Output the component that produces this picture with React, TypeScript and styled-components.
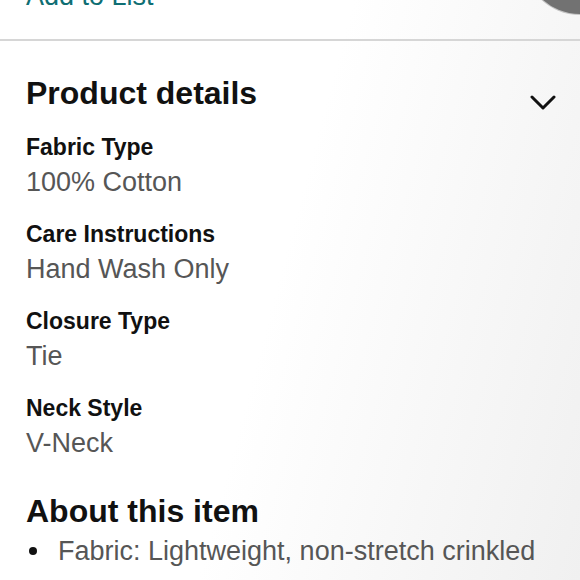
import React from "react";
import styled, { createGlobalStyle } from "styled-components";

const Global = createGlobalStyle`
  html, body { margin: 0; padding: 0; }
  body { font-family: "Liberation Sans", Arial, sans-serif; background: #fff; }
`;

const Page = styled.div`
  position: relative;
  width: 580px;
  height: 580px;
  overflow: hidden;
  background: linear-gradient(105deg, #ffffff 48%, #f0f0f0 100%);
`;

const TopBlob = styled.div`
  position: absolute;
  right: -56px;
  top: -98px;
  width: 112px;
  height: 112px;
  border-radius: 50%;
  background: #727272;
  box-shadow: 0 0 0 1px #c4c4c4;
`;

const TopBar = styled.div`
  display: flow-root;
  padding: 0 26px;
  height: 39px;
  border-bottom: 2px solid #d6d6d6;
`;

const AddLink = styled.div`
  margin-top: -19px;
  font-size: 27px;
  line-height: 30px;
  color: #0f6e73;
`;

const Content = styled.div`
  display: flow-root;
  padding: 0 24px 0 26px;
`;

const HeadingRow = styled.div`
  display: flex;
  justify-content: space-between;
  align-items: flex-start;
  margin-top: 33px;
`;

const Heading = styled.h2<{ $top?: number }>`
  margin: ${(p) => p.$top ?? 0}px 0 0;
  font-size: 32px;
  line-height: 38px;
  font-weight: 700;
  color: #111;
`;

const Chevron = styled.svg`
  margin-top: 20px;
  flex-shrink: 0;
`;

const Detail = styled.div<{ $first?: boolean }>`
  margin-top: ${(p) => (p.$first ? 21 : 22)}px;
`;

const Label = styled.div`
  font-size: 23px;
  line-height: 28px;
  font-weight: 700;
  color: #111;
`;

const Value = styled.div`
  margin-top: 5px;
  font-size: 27px;
  line-height: 32px;
  color: #565656;
`;

const Bullets = styled.ul`
  list-style: none;
  margin: 5px 0 0;
  padding: 0;
`;

const BulletItem = styled.li`
  display: flex;
  align-items: center;
  gap: 21px;
  font-size: 27px;
  line-height: 32px;
  color: #565656;
  white-space: nowrap;
`;

const Dot = styled.span`
  width: 8px;
  height: 8px;
  border-radius: 50%;
  background: #111;
  margin-left: 3px;
  flex-shrink: 0;
`;

const details = [
  { label: "Fabric Type", value: "100% Cotton" },
  { label: "Care Instructions", value: "Hand Wash Only" },
  { label: "Closure Type", value: "Tie" },
  { label: "Neck Style", value: "V-Neck" },
];

export default function App() {
  return (
    <>
      <Global />
      <Page>
        <TopBlob />
        <TopBar>
          <AddLink>Add to List</AddLink>
        </TopBar>
        <Content>
          <HeadingRow>
            <Heading>Product details</Heading>
            <Chevron width="26" height="18" viewBox="0 0 26 18">
              <polyline
                points="2,3 13,14 24,3"
                fill="none"
                stroke="#111"
                strokeWidth="3"
                strokeLinecap="round"
                strokeLinejoin="round"
              />
            </Chevron>
          </HeadingRow>
          {details.map((d, i) => (
            <Detail key={d.label} $first={i === 0}>
              <Label>{d.label}</Label>
              <Value>{d.value}</Value>
            </Detail>
          ))}
          <Heading $top={33}>About this item</Heading>
          <Bullets>
            <BulletItem>
              <Dot />
              Fabric: Lightweight, non-stretch crinkled
            </BulletItem>
          </Bullets>
        </Content>
      </Page>
    </>
  );
}
